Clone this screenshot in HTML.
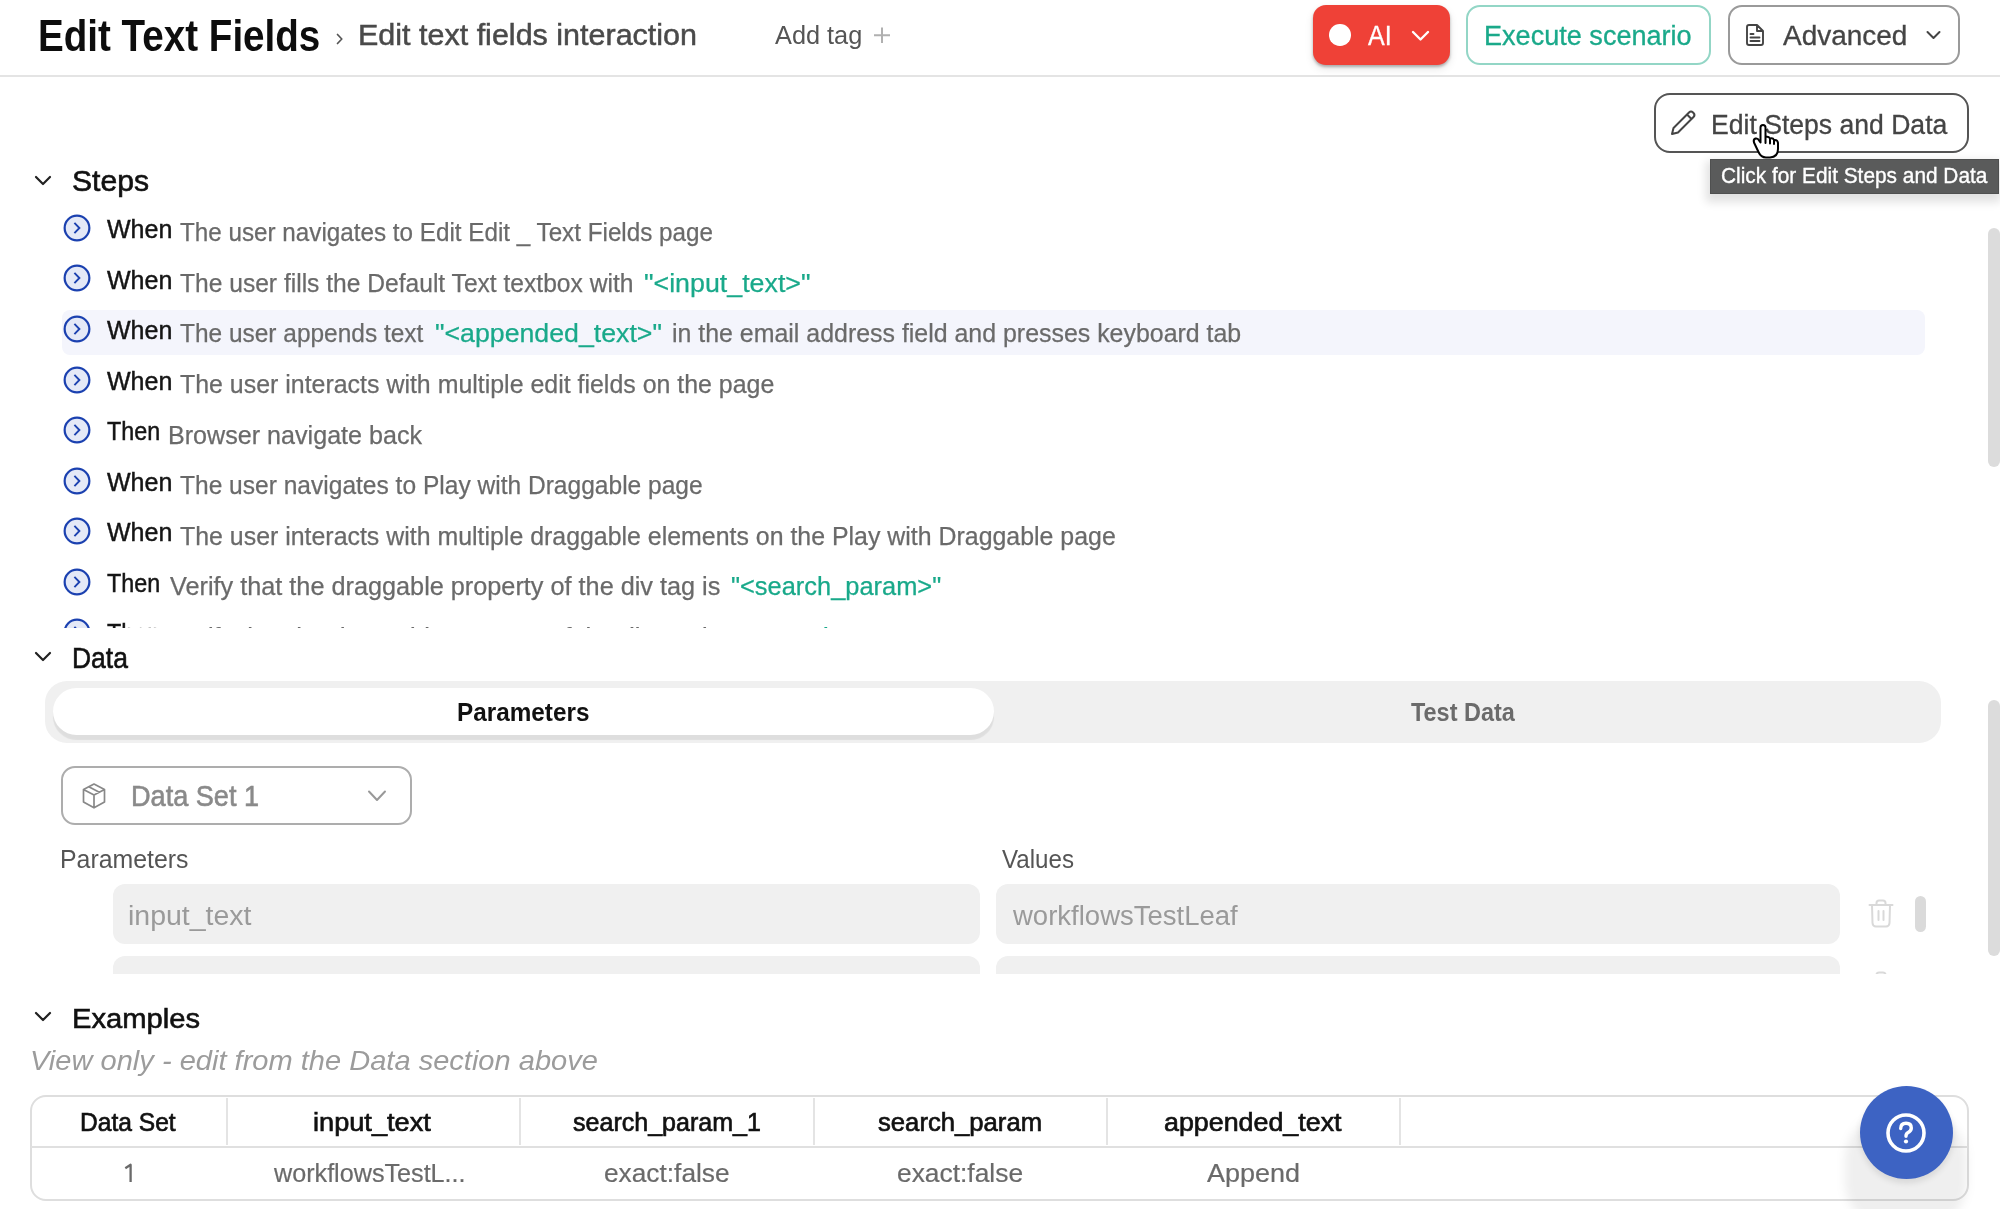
<!DOCTYPE html>
<html><head><meta charset="utf-8"><title>Edit Text Fields</title>
<style>
html,body{margin:0;padding:0;background:#fff;width:2000px;height:1209px;overflow:hidden;position:relative;font-family:"Liberation Sans",sans-serif}
.a{position:absolute}
.t{position:absolute;white-space:nowrap;transform-origin:0 0}
.m{display:inline-block;width:0;height:0}
svg.a{overflow:visible}
</style></head><body>
<div class="t" style="left:37.78px;top:15.00px;font-size:43.61px;line-height:43.61px;color:#0d0d0d;font-weight:bold;font-style:normal;transform:scaleX(0.8849);">Edit Text Fields<span class="m"></span></div>
<svg class="a" style="left:333px;top:32px" width="14" height="14" viewBox="0 0 14 14"><path d="M4.5 2.5 L8.8 7 L4.5 11.5" fill="none" stroke="#555" stroke-width="1.7" stroke-linecap="round" stroke-linejoin="round"/></svg>
<div class="t" style="left:357.98px;top:21.01px;font-size:29.07px;line-height:29.07px;color:#4a4a4a;font-weight:normal;font-style:normal;transform:scaleX(1.0493);-webkit-text-stroke:0.5px #4a4a4a;">Edit text fields interaction<span class="m"></span></div>
<div class="t" style="left:774.60px;top:23.41px;font-size:25.58px;line-height:25.58px;color:#555;font-weight:normal;font-style:normal;transform:scaleX(0.9899);">Add tag<span class="m"></span></div>
<svg class="a" style="left:873px;top:27px" width="18" height="17" viewBox="0 0 18 17"><path d="M9 0.5 V16 M1 8.3 H17" fill="none" stroke="#b0b0b0" stroke-width="2"/></svg>
<div class="a" style="left:0;top:75px;width:2000px;height:2px;background:#e4e4e4"></div>
<div class="a" style="left:1313px;top:5px;width:137px;height:60px;border-radius:13px;background:#ef4137;box-shadow:0 2px 3px rgba(0,0,0,0.28),0 4px 8px rgba(0,0,0,0.10)"></div>
<div class="a" style="left:1329px;top:24px;width:21.5px;height:21.5px;border-radius:50%;background:#fff"></div>
<div class="t" style="left:1368.00px;top:22.22px;font-size:27.33px;line-height:27.33px;color:#fff;font-weight:normal;font-style:normal;transform:scaleX(0.9168);-webkit-text-stroke:0.3px #fff;">AI<span class="m"></span></div>
<svg class="a" style="left:1410px;top:29px" width="21" height="14" viewBox="0 0 21 14"><path d="M3 3 L10.5 10.5 L18 3" fill="none" stroke="#fff" stroke-width="2.4" stroke-linecap="round" stroke-linejoin="round"/></svg>
<div class="a" style="left:1466px;top:5px;width:245px;height:60px;box-sizing:border-box;border:2px solid #93d6c6;border-radius:14px;background:#fff"></div>
<div class="t" style="left:1484.46px;top:23.00px;font-size:26.74px;line-height:26.74px;color:#1aa98a;font-weight:normal;font-style:normal;transform:scaleX(1.0127);-webkit-text-stroke:0.3px #1aa98a;">Execute scenario<span class="m"></span></div>
<div class="a" style="left:1728px;top:5px;width:232px;height:60px;box-sizing:border-box;border:2px solid #9a9a9a;border-radius:14px;background:#fff"></div>
<svg class="a" style="left:1744px;top:23px" width="22" height="24" viewBox="0 0 22 24"><path d="M3 4 Q3 2 5 2 H13 L19 8 V20 Q19 22 17 22 H5 Q3 22 3 20 Z M13 2 V8 H19 M6.5 11 H9.5 M6.5 14.5 H15.5 M6.5 18 H15.5" fill="none" stroke="#444" stroke-width="1.9" stroke-linejoin="round" stroke-linecap="round"/></svg>
<div class="t" style="left:1783.00px;top:23.00px;font-size:26.74px;line-height:26.74px;color:#454545;font-weight:normal;font-style:normal;transform:scaleX(1.0464);-webkit-text-stroke:0.3px #454545;">Advanced<span class="m"></span></div>
<svg class="a" style="left:1925px;top:29px" width="17" height="12" viewBox="0 0 17 12"><path d="M2.5 3 L8.5 9 L14.5 3" fill="none" stroke="#444" stroke-width="2" stroke-linecap="round" stroke-linejoin="round"/></svg>
<div class="a" style="left:1654px;top:93px;width:315px;height:60px;box-sizing:border-box;border:2px solid #555;border-radius:16px;background:#fff"></div>
<svg class="a" style="left:1668px;top:108px" width="30" height="30" viewBox="0 0 30 30"><path d="M4 26 L5.5 20 L21 4.5 Q23 2.5 25 4.5 L25.5 5 Q27.5 7 25.5 9 L10 24.5 Z M19 6.5 L23.5 11" fill="none" stroke="#444" stroke-width="2" stroke-linejoin="round" stroke-linecap="round"/></svg>
<div class="t" style="left:1711.48px;top:112.00px;font-size:26.74px;line-height:26.74px;color:#444;font-weight:normal;font-style:normal;transform:scaleX(0.9937);-webkit-text-stroke:0.3px #444;">Edit Steps and Data<span class="m"></span></div>
<svg class="a" style="left:33px;top:174px" width="20" height="14" viewBox="0 0 20 14"><path d="M3 3 L10 10 L17 3" fill="none" stroke="#222" stroke-width="2.2" stroke-linecap="round" stroke-linejoin="round"/></svg>
<div class="t" style="left:72.15px;top:167.01px;font-size:28.78px;line-height:28.78px;color:#111;font-weight:normal;font-style:normal;transform:scaleX(1.0466);-webkit-text-stroke:0.6px #111;">Steps<span class="m"></span></div>
<div class="a" style="left:0;top:200px;width:1960px;height:428px;overflow:hidden">
<svg class="a" style="left:62.55px;top:13.85px" width="28" height="28" viewBox="0 0 28 28"><circle cx="14" cy="14" r="12.35" fill="#e4e9f7" stroke="#1b41b0" stroke-width="2.2"/><path d="M11.4 8.9 L16.4 14 L11.4 19.1" fill="none" stroke="#1b41b0" stroke-width="1.9" stroke-linecap="butt" stroke-linejoin="miter"/></svg>
<div class="t" style="left:106.90px;top:17.00px;font-size:25.00px;line-height:25.00px;color:#151515;font-weight:normal;font-style:normal;transform:scaleX(1.0012);-webkit-text-stroke:0.45px #151515;">When<span class="m"></span></div>
<div class="t" style="left:180.00px;top:20.31px;font-size:25.15px;line-height:25.15px;color:#6a6a6a;font-weight:normal;font-style:normal;transform:scaleX(0.9639);-webkit-text-stroke:0.25px #6a6a6a;">The user navigates to Edit Edit _ Text Fields page<span class="m"></span></div>
<svg class="a" style="left:62.55px;top:64.40px" width="28" height="28" viewBox="0 0 28 28"><circle cx="14" cy="14" r="12.35" fill="#e4e9f7" stroke="#1b41b0" stroke-width="2.2"/><path d="M11.4 8.9 L16.4 14 L11.4 19.1" fill="none" stroke="#1b41b0" stroke-width="1.9" stroke-linecap="butt" stroke-linejoin="miter"/></svg>
<div class="t" style="left:106.90px;top:67.56px;font-size:25.00px;line-height:25.00px;color:#151515;font-weight:normal;font-style:normal;transform:scaleX(1.0012);-webkit-text-stroke:0.45px #151515;">When<span class="m"></span></div>
<div class="t" style="left:180.00px;top:70.85px;font-size:25.15px;line-height:25.15px;color:#6a6a6a;font-weight:normal;font-style:normal;transform:scaleX(0.9783);-webkit-text-stroke:0.25px #6a6a6a;">The user fills the Default Text textbox with<span class="m"></span></div>
<div class="t" style="left:643.58px;top:70.85px;font-size:25.15px;line-height:25.15px;color:#19a98a;font-weight:normal;font-style:normal;transform:scaleX(1.0656);-webkit-text-stroke:0.25px #19a98a;">"&lt;input_text&gt;"<span class="m"></span></div>
<div class="a" style="left:62px;top:110px;width:1863px;height:44.5px;border-radius:8px;background:#f4f5fc"></div>
<svg class="a" style="left:62.55px;top:114.95px" width="28" height="28" viewBox="0 0 28 28"><circle cx="14" cy="14" r="12.35" fill="#e4e9f7" stroke="#1b41b0" stroke-width="2.2"/><path d="M11.4 8.9 L16.4 14 L11.4 19.1" fill="none" stroke="#1b41b0" stroke-width="1.9" stroke-linecap="butt" stroke-linejoin="miter"/></svg>
<div class="t" style="left:106.90px;top:118.11px;font-size:25.00px;line-height:25.00px;color:#151515;font-weight:normal;font-style:normal;transform:scaleX(1.0012);-webkit-text-stroke:0.45px #151515;">When<span class="m"></span></div>
<div class="t" style="left:180.00px;top:121.40px;font-size:25.15px;line-height:25.15px;color:#6a6a6a;font-weight:normal;font-style:normal;transform:scaleX(0.9728);-webkit-text-stroke:0.25px #6a6a6a;">The user appends text<span class="m"></span></div>
<div class="t" style="left:435.49px;top:121.40px;font-size:25.15px;line-height:25.15px;color:#19a98a;font-weight:normal;font-style:normal;transform:scaleX(1.0623);-webkit-text-stroke:0.25px #19a98a;">"&lt;appended_text&gt;"<span class="m"></span></div>
<div class="t" style="left:671.59px;top:121.40px;font-size:25.15px;line-height:25.15px;color:#6a6a6a;font-weight:normal;font-style:normal;transform:scaleX(0.9910);-webkit-text-stroke:0.25px #6a6a6a;">in the email address field and presses keyboard tab<span class="m"></span></div>
<svg class="a" style="left:62.55px;top:165.50px" width="28" height="28" viewBox="0 0 28 28"><circle cx="14" cy="14" r="12.35" fill="#e4e9f7" stroke="#1b41b0" stroke-width="2.2"/><path d="M11.4 8.9 L16.4 14 L11.4 19.1" fill="none" stroke="#1b41b0" stroke-width="1.9" stroke-linecap="butt" stroke-linejoin="miter"/></svg>
<div class="t" style="left:106.90px;top:168.66px;font-size:25.00px;line-height:25.00px;color:#151515;font-weight:normal;font-style:normal;transform:scaleX(1.0012);-webkit-text-stroke:0.45px #151515;">When<span class="m"></span></div>
<div class="t" style="left:180.00px;top:171.95px;font-size:25.15px;line-height:25.15px;color:#6a6a6a;font-weight:normal;font-style:normal;transform:scaleX(0.9913);-webkit-text-stroke:0.25px #6a6a6a;">The user interacts with multiple edit fields on the page<span class="m"></span></div>
<svg class="a" style="left:62.55px;top:216.05px" width="28" height="28" viewBox="0 0 28 28"><circle cx="14" cy="14" r="12.35" fill="#e4e9f7" stroke="#1b41b0" stroke-width="2.2"/><path d="M11.4 8.9 L16.4 14 L11.4 19.1" fill="none" stroke="#1b41b0" stroke-width="1.9" stroke-linecap="butt" stroke-linejoin="miter"/></svg>
<div class="t" style="left:106.89px;top:219.22px;font-size:25.00px;line-height:25.00px;color:#151515;font-weight:normal;font-style:normal;transform:scaleX(0.9322);-webkit-text-stroke:0.45px #151515;">Then<span class="m"></span></div>
<div class="t" style="left:167.79px;top:222.51px;font-size:25.15px;line-height:25.15px;color:#6a6a6a;font-weight:normal;font-style:normal;transform:scaleX(0.9990);-webkit-text-stroke:0.25px #6a6a6a;">Browser navigate back<span class="m"></span></div>
<svg class="a" style="left:62.55px;top:266.60px" width="28" height="28" viewBox="0 0 28 28"><circle cx="14" cy="14" r="12.35" fill="#e4e9f7" stroke="#1b41b0" stroke-width="2.2"/><path d="M11.4 8.9 L16.4 14 L11.4 19.1" fill="none" stroke="#1b41b0" stroke-width="1.9" stroke-linecap="butt" stroke-linejoin="miter"/></svg>
<div class="t" style="left:106.90px;top:269.75px;font-size:25.00px;line-height:25.00px;color:#151515;font-weight:normal;font-style:normal;transform:scaleX(1.0012);-webkit-text-stroke:0.45px #151515;">When<span class="m"></span></div>
<div class="t" style="left:180.00px;top:273.06px;font-size:25.15px;line-height:25.15px;color:#6a6a6a;font-weight:normal;font-style:normal;transform:scaleX(0.9765);-webkit-text-stroke:0.25px #6a6a6a;">The user navigates to Play with Draggable page<span class="m"></span></div>
<svg class="a" style="left:62.55px;top:317.15px" width="28" height="28" viewBox="0 0 28 28"><circle cx="14" cy="14" r="12.35" fill="#e4e9f7" stroke="#1b41b0" stroke-width="2.2"/><path d="M11.4 8.9 L16.4 14 L11.4 19.1" fill="none" stroke="#1b41b0" stroke-width="1.9" stroke-linecap="butt" stroke-linejoin="miter"/></svg>
<div class="t" style="left:106.90px;top:320.31px;font-size:25.00px;line-height:25.00px;color:#151515;font-weight:normal;font-style:normal;transform:scaleX(1.0012);-webkit-text-stroke:0.45px #151515;">When<span class="m"></span></div>
<div class="t" style="left:180.00px;top:323.60px;font-size:25.15px;line-height:25.15px;color:#6a6a6a;font-weight:normal;font-style:normal;transform:scaleX(0.9905);-webkit-text-stroke:0.25px #6a6a6a;">The user interacts with multiple draggable elements on the Play with Draggable page<span class="m"></span></div>
<svg class="a" style="left:62.55px;top:367.70px" width="28" height="28" viewBox="0 0 28 28"><circle cx="14" cy="14" r="12.35" fill="#e4e9f7" stroke="#1b41b0" stroke-width="2.2"/><path d="M11.4 8.9 L16.4 14 L11.4 19.1" fill="none" stroke="#1b41b0" stroke-width="1.9" stroke-linecap="butt" stroke-linejoin="miter"/></svg>
<div class="t" style="left:106.89px;top:370.86px;font-size:25.00px;line-height:25.00px;color:#151515;font-weight:normal;font-style:normal;transform:scaleX(0.9322);-webkit-text-stroke:0.45px #151515;">Then<span class="m"></span></div>
<div class="t" style="left:169.80px;top:374.15px;font-size:25.15px;line-height:25.15px;color:#6a6a6a;font-weight:normal;font-style:normal;transform:scaleX(1.0046);-webkit-text-stroke:0.25px #6a6a6a;">Verify that the draggable property of the div tag is<span class="m"></span></div>
<div class="t" style="left:731.49px;top:374.15px;font-size:25.15px;line-height:25.15px;color:#19a98a;font-weight:normal;font-style:normal;transform:scaleX(1.0111);-webkit-text-stroke:0.25px #19a98a;">"&lt;search_param&gt;"<span class="m"></span></div>
<svg class="a" style="left:62.55px;top:418.25px" width="28" height="28" viewBox="0 0 28 28"><circle cx="14" cy="14" r="12.35" fill="#e4e9f7" stroke="#1b41b0" stroke-width="2.2"/><path d="M11.4 8.9 L16.4 14 L11.4 19.1" fill="none" stroke="#1b41b0" stroke-width="1.9" stroke-linecap="butt" stroke-linejoin="miter"/></svg>
<div class="t" style="left:106.89px;top:421.41px;font-size:25.00px;line-height:25.00px;color:#151515;font-weight:normal;font-style:normal;transform:scaleX(0.9322);-webkit-text-stroke:0.45px #151515;">Then<span class="m"></span></div>
<div class="t" style="left:169.80px;top:424.70px;font-size:25.15px;line-height:25.15px;color:#6a6a6a;font-weight:normal;font-style:normal;transform:scaleX(1.0046);-webkit-text-stroke:0.25px #6a6a6a;">Verify that the draggable property of the div tag is<span class="m"></span></div>
<div class="t" style="left:731.49px;top:424.70px;font-size:25.15px;line-height:25.15px;color:#19a98a;font-weight:normal;font-style:normal;transform:scaleX(1.0785);-webkit-text-stroke:0.25px #19a98a;">"&lt;search_param_1&gt;"<span class="m"></span></div>
</div>
<div class="a" style="left:1988px;top:228px;width:12px;height:238.5px;border-radius:6px;background:#dcdcdc"></div>
<svg class="a" style="left:33px;top:650px" width="20" height="14" viewBox="0 0 20 14"><path d="M3 3 L10 10 L17 3" fill="none" stroke="#222" stroke-width="2.2" stroke-linecap="round" stroke-linejoin="round"/></svg>
<div class="t" style="left:72.19px;top:642.61px;font-size:29.65px;line-height:29.65px;color:#111;font-weight:normal;font-style:normal;transform:scaleX(0.8926);-webkit-text-stroke:0.6px #111;">Data<span class="m"></span></div>
<div class="a" style="left:45px;top:681px;width:1896px;height:62px;border-radius:22px;background:#f0f0f0"></div>
<div class="a" style="left:53px;top:688px;width:941px;height:47px;border-radius:24px;background:#fff;box-shadow:0 5px 1px rgba(0,0,0,0.075)"></div>
<div class="t" style="left:456.55px;top:699.82px;font-size:25.58px;line-height:25.58px;color:#111;font-weight:bold;font-style:normal;transform:scaleX(0.9502);">Parameters<span class="m"></span></div>
<div class="t" style="left:1411.40px;top:699.82px;font-size:25.58px;line-height:25.58px;color:#6b6b6b;font-weight:bold;font-style:normal;transform:scaleX(0.9167);">Test Data<span class="m"></span></div>
<div class="a" style="left:61px;top:766px;width:351px;height:59px;box-sizing:border-box;border:2px solid #adadad;border-radius:14px;background:#fff"></div>
<svg class="a" style="left:81px;top:782px" width="26" height="28" viewBox="0 0 26 28"><path d="M13 2 L23.5 7.5 V20 L13 25.8 L2.5 20 V7.5 Z M2.5 7.5 L13 13 L23.5 7.5 M13 13 V25.8 M7.8 4.8 L18.3 10.3" fill="none" stroke="#888" stroke-width="1.7" stroke-linejoin="round"/></svg>
<div class="t" style="left:130.85px;top:782.31px;font-size:28.92px;line-height:28.92px;color:#8a8a8a;font-weight:normal;font-style:normal;transform:scaleX(0.9377);-webkit-text-stroke:0.6px #8a8a8a;">Data Set 1<span class="m"></span></div>
<svg class="a" style="left:366px;top:788px" width="22" height="16" viewBox="0 0 22 16"><path d="M3 3.5 L11 12 L19 3.5" fill="none" stroke="#999" stroke-width="2" stroke-linecap="round" stroke-linejoin="round"/></svg>
<div class="t" style="left:59.95px;top:846.72px;font-size:25.00px;line-height:25.00px;color:#555;font-weight:normal;font-style:normal;transform:scaleX(0.9941);">Parameters<span class="m"></span></div>
<div class="t" style="left:1001.91px;top:846.72px;font-size:25.00px;line-height:25.00px;color:#555;font-weight:normal;font-style:normal;transform:scaleX(0.9663);">Values<span class="m"></span></div>
<div class="a" style="left:0;top:870px;width:1960px;height:104px;overflow:hidden">
<div class="a" style="left:113px;top:14px;width:866.5px;height:60px;border-radius:12px;background:#f0f0f0"></div>
<div class="a" style="left:996px;top:14px;width:844px;height:60px;border-radius:12px;background:#f0f0f0"></div>
<svg class="a" style="left:1866px;top:28px" width="30" height="32" viewBox="0 0 30 32"><path d="M3.5 7 H26.5 M10.5 7 V5 Q10.5 2.5 13 2.5 H17 Q19.5 2.5 19.5 5 V7 M6 7 L6.5 25 Q6.8 28.5 10 28.5 H20 Q23.2 28.5 23.5 25 L24 7 M12.5 13 V22 M17.5 13 V22" fill="none" stroke="#d9d9d9" stroke-width="2" stroke-linecap="round" stroke-linejoin="round"/></svg>
<div class="a" style="left:113px;top:86px;width:866.5px;height:60px;border-radius:12px;background:#f0f0f0"></div>
<div class="a" style="left:996px;top:86px;width:844px;height:60px;border-radius:12px;background:#f0f0f0"></div>
<svg class="a" style="left:1866px;top:100px" width="30" height="32" viewBox="0 0 30 32"><path d="M3.5 7 H26.5 M10.5 7 V5 Q10.5 2.5 13 2.5 H17 Q19.5 2.5 19.5 5 V7 M6 7 L6.5 25 Q6.8 28.5 10 28.5 H20 Q23.2 28.5 23.5 25 L24 7 M12.5 13 V22 M17.5 13 V22" fill="none" stroke="#d9d9d9" stroke-width="2" stroke-linecap="round" stroke-linejoin="round"/></svg>
<div class="t" style="left:128.37px;top:30.71px;font-size:28.34px;line-height:28.34px;color:#9a9a9a;font-weight:normal;font-style:normal;transform:scaleX(1.0054);">input_text<span class="m"></span></div>
<div class="t" style="left:1012.54px;top:30.71px;font-size:28.34px;line-height:28.34px;color:#9a9a9a;font-weight:normal;font-style:normal;transform:scaleX(0.9710);">workflowsTestLeaf<span class="m"></span></div>
<div class="a" style="left:1914.5px;top:26px;width:11px;height:36px;border-radius:6px;background:#dadada"></div>
</div>
<div class="a" style="left:1988px;top:700px;width:12px;height:256px;border-radius:6px;background:#dcdcdc"></div>
<svg class="a" style="left:33px;top:1010px" width="20" height="14" viewBox="0 0 20 14"><path d="M3 3 L10 10 L17 3" fill="none" stroke="#222" stroke-width="2.2" stroke-linecap="round" stroke-linejoin="round"/></svg>
<div class="t" style="left:71.95px;top:1003.50px;font-size:28.34px;line-height:28.34px;color:#111;font-weight:normal;font-style:normal;transform:scaleX(1.0293);-webkit-text-stroke:0.6px #111;">Examples<span class="m"></span></div>
<div class="t" style="left:30.48px;top:1047.40px;font-size:27.47px;line-height:27.47px;color:#9c9c9c;font-weight:normal;font-style:italic;transform:scaleX(1.0577);">View only - edit from the Data section above<span class="m"></span></div>
<div class="a" style="left:30px;top:1095px;width:1939px;height:106px;box-sizing:border-box;border:2px solid #dedede;border-radius:16px;background:#fff"></div>
<div class="a" style="left:31px;top:1145.5px;width:1937px;height:2px;background:#e0e0e0"></div>
<div class="a" style="left:226px;top:1098px;width:2px;height:47px;background:#e4e4e4"></div>
<div class="a" style="left:519px;top:1098px;width:2px;height:47px;background:#e4e4e4"></div>
<div class="a" style="left:812.5px;top:1098px;width:2px;height:47px;background:#e4e4e4"></div>
<div class="a" style="left:1105.5px;top:1098px;width:2px;height:47px;background:#e4e4e4"></div>
<div class="a" style="left:1399px;top:1098px;width:2px;height:47px;background:#e4e4e4"></div>
<div class="t" style="left:80.36px;top:1109.81px;font-size:25.15px;line-height:25.15px;color:#111;font-weight:normal;font-style:normal;transform:scaleX(0.9777);-webkit-text-stroke:0.65px #111;">Data Set<span class="m"></span></div>
<div class="t" style="left:313.46px;top:1109.81px;font-size:25.15px;line-height:25.15px;color:#111;font-weight:normal;font-style:normal;transform:scaleX(1.0801);-webkit-text-stroke:0.65px #111;">input_text<span class="m"></span></div>
<div class="t" style="left:572.99px;top:1109.81px;font-size:25.15px;line-height:25.15px;color:#111;font-weight:normal;font-style:normal;transform:scaleX(0.9963);-webkit-text-stroke:0.65px #111;">search_param_1<span class="m"></span></div>
<div class="t" style="left:877.99px;top:1109.81px;font-size:25.15px;line-height:25.15px;color:#111;font-weight:normal;font-style:normal;transform:scaleX(1.0208);-webkit-text-stroke:0.65px #111;">search_param<span class="m"></span></div>
<div class="t" style="left:1163.99px;top:1109.81px;font-size:25.15px;line-height:25.15px;color:#111;font-weight:normal;font-style:normal;transform:scaleX(1.0672);-webkit-text-stroke:0.65px #111;">appended_text<span class="m"></span></div>
<div class="t" style="left:121.10px;top:1161.00px;font-size:24.86px;line-height:24.86px;color:transparent;font-weight:normal;font-style:normal;transform:scaleX(1.0000);">1<span class="m"></span></div>
<svg class="a" style="left:120px;top:1160px" width="20" height="26" viewBox="0 0 20 26"><path d="M5.3 8.3 L10.6 4.8 V22" fill="none" stroke="#6a6a6a" stroke-width="2.3" stroke-linejoin="round"/></svg>
<div class="t" style="left:274.42px;top:1161.00px;font-size:24.86px;line-height:24.86px;color:#6a6a6a;font-weight:normal;font-style:normal;transform:scaleX(1.0123);-webkit-text-stroke:0.2px #6a6a6a;">workflowsTestL...<span class="m"></span></div>
<div class="t" style="left:603.98px;top:1161.00px;font-size:24.86px;line-height:24.86px;color:#6a6a6a;font-weight:normal;font-style:normal;transform:scaleX(1.0566);-webkit-text-stroke:0.2px #6a6a6a;">exact:false<span class="m"></span></div>
<div class="t" style="left:896.98px;top:1161.00px;font-size:24.86px;line-height:24.86px;color:#6a6a6a;font-weight:normal;font-style:normal;transform:scaleX(1.0608);-webkit-text-stroke:0.2px #6a6a6a;">exact:false<span class="m"></span></div>
<div class="t" style="left:1207.49px;top:1161.00px;font-size:24.86px;line-height:24.86px;color:#6a6a6a;font-weight:normal;font-style:normal;transform:scaleX(1.0851);-webkit-text-stroke:0.2px #6a6a6a;">Append<span class="m"></span></div>
<div class="a" style="left:1845px;top:1112px;width:122px;height:118px;border-radius:48px;background:rgba(0,0,0,0.062);filter:blur(5px)"></div>
<div class="a" style="left:1860px;top:1086px;width:93px;height:93px;border-radius:50%;background:#3d63c3;box-shadow:0 4px 6px rgba(0,0,0,0.10)"></div>
<svg class="a" style="left:1883px;top:1110px" width="46" height="46" viewBox="0 0 46 46"><circle cx="23" cy="23" r="18" fill="none" stroke="#fff" stroke-width="3.6"/><path d="M17.7 18.5 Q17.7 13.3 23 13.3 Q28.3 13.3 28.3 18 Q28.3 21 24.8 22.8 Q23 23.7 23 26.3" fill="none" stroke="#fff" stroke-width="3.4" stroke-linecap="round"/><circle cx="23" cy="31.5" r="2.1" fill="#fff"/></svg>
<div class="a" style="left:1709.5px;top:159.3px;width:289px;height:35px;box-sizing:border-box;border:1px solid #4f5050;background:#5a5b5b;box-shadow:-1px 5px 9px 3px rgba(0,0,0,0.12)"></div>
<div class="t" style="left:1720.80px;top:165.31px;font-size:21.66px;line-height:21.66px;color:#fff;font-weight:normal;font-style:normal;transform:scaleX(0.9621);-webkit-text-stroke:0.35px #fff;">Click for Edit Steps and Data<span class="m"></span></div>
<svg class="a" style="left:1750px;top:123px" width="32" height="38" viewBox="0 0 32 38"><path d="M10.5 19.5 V4.5 Q10.5 2 13 2 Q15.5 2 15.5 4.5 V14 Q18.5 13 20 15.5 Q23 14.5 24 17 Q27.5 16.5 28 20 V26 Q28 34 20 34.5 H16 Q11 34.5 8.5 29 L4 19.5 Q3 16.5 5.5 15.5 Q8 15 9 17.5 Z M15.5 14 V20 M20 15.5 V20.5 M24 17 V21" fill="#fff" stroke="#000" stroke-width="2" stroke-linejoin="round" stroke-linecap="round"/></svg>
</body></html>
